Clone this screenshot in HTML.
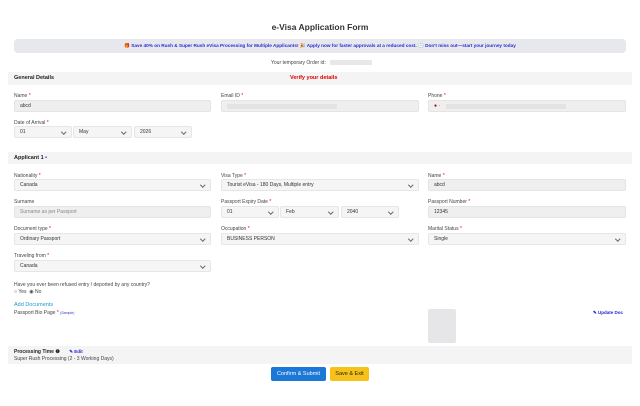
<!DOCTYPE html>
<html><head><style>
*{box-sizing:border-box;margin:0;padding:0}
body{width:640px;height:406px;background:#fff;font-family:"Liberation Sans",sans-serif;position:relative;overflow:hidden;color:#333}
.a{position:absolute;white-space:nowrap}
.lbl{font-size:5px;color:#444}
.lbl b{color:#d00;font-weight:normal}
.in{position:absolute;background:#efefef;border:1px solid #e4e4e4;border-radius:2px;font-size:5px;color:#333;padding-left:5px;display:flex;align-items:center;height:12px}
.sel{background:#f5f5f5;border:1px solid #e6e6e6}
.sel:after{content:"";position:absolute;right:6px;top:3px;width:2.5px;height:2.5px;border-right:0.7px solid #666;border-bottom:0.7px solid #666;transform:rotate(45deg)}
.bar{position:absolute;left:8px;width:624px;background:#f4f4f4}
.h{font-size:5.5px;font-weight:bold;color:#222}
</style></head><body>
<div class="a" style="left:0;width:640px;text-align:center;top:22px;font-size:8.5px;font-weight:bold;color:#333">e-Visa Application Form</div>
<div class="a" style="left:14px;width:612px;top:39px;height:14px;background:#e7e8ee;border-radius:4px;font-size:4.7px;font-weight:bold;color:#2a2ad0;text-align:center;line-height:14px">🎁 Save 40% on Rush &amp; Super Rush eVisa Processing for Multiple Applicants! 🎉 Apply now for faster approvals at a reduced cost. 🕒 Don't miss out—start your journey today</div>
<div class="a lbl" style="left:271px;top:60px">Your temporary Order id:</div>
<div class="a" style="left:330px;top:60px;width:42px;height:5px;background:#e8e8e8"></div>
<div class="bar" style="top:72px;height:13px"></div>
<div class="a h" style="left:14px;top:75px">General Details</div>
<div class="a" style="left:290px;top:75px;font-size:5.5px;font-weight:bold;color:#d00">Verify your details</div>

<div class="a lbl" style="left:14px;top:93px">Name <b>*</b></div>
<div class="in" style="left:14px;top:100px;width:197px">abcd</div>
<div class="a lbl" style="left:221px;top:93px">Email ID <b>*</b></div>
<div class="in" style="left:221px;top:100px;width:198px"><span style="display:block;width:110px;height:5px;background:#e3e3e3"></span></div>
<div class="a lbl" style="left:428px;top:93px">Phone <b>*</b></div>
<div class="in" style="left:428px;top:100px;width:198px"><span style="color:#a00">● ·</span><span style="display:block;margin-left:6px;width:120px;height:5px;background:#e3e3e3"></span></div>

<div class="a lbl" style="left:14px;top:120px">Date of Arrival <b>*</b></div>
<div class="in sel" style="left:14px;top:126px;width:58px">01</div>
<div class="in sel" style="left:73px;top:126px;width:59px">May</div>
<div class="in sel" style="left:134px;top:126px;width:58px">2026</div>

<div class="bar" style="top:152px;height:12px"></div>
<div class="a h" style="left:14px;top:155px">Applicant 1 <span style="color:#33c">•</span></div>

<div class="a lbl" style="left:14px;top:173px">Nationality <b>*</b></div>
<div class="in sel" style="left:14px;top:179px;width:197px">Canada</div>
<div class="a lbl" style="left:221px;top:173px">Visa Type <b>*</b></div>
<div class="in sel" style="left:221px;top:179px;width:198px">Tourist eVisa - 180 Days, Multiple entry</div>
<div class="a lbl" style="left:428px;top:173px">Name <b>*</b></div>
<div class="in" style="left:428px;top:179px;width:198px">abcd</div>

<div class="a lbl" style="left:14px;top:199px">Surname</div>
<div class="in" style="left:14px;top:206px;width:197px;color:#888">Surname as per Passport</div>
<div class="a lbl" style="left:221px;top:199px">Passport Expiry Date <b>*</b></div>
<div class="in sel" style="left:221px;top:206px;width:58px">01</div>
<div class="in sel" style="left:280px;top:206px;width:59px">Feb</div>
<div class="in sel" style="left:341px;top:206px;width:58px">2040</div>
<div class="a lbl" style="left:428px;top:199px">Passport Number <b>*</b></div>
<div class="in" style="left:428px;top:206px;width:198px">12345</div>

<div class="a lbl" style="left:14px;top:226px">Document type <b>*</b></div>
<div class="in sel" style="left:14px;top:233px;width:197px">Ordinary Passport</div>
<div class="a lbl" style="left:221px;top:226px">Occupation <b>*</b></div>
<div class="in sel" style="left:221px;top:233px;width:198px">BUSINESS PERSON</div>
<div class="a lbl" style="left:428px;top:226px">Marital Status <b>*</b></div>
<div class="in sel" style="left:428px;top:233px;width:198px">Single</div>

<div class="a lbl" style="left:14px;top:253px">Traveling from <b>*</b></div>
<div class="in sel" style="left:14px;top:260px;width:197px">Canada</div>

<div class="a lbl" style="left:14px;top:282px">Have you ever been refused entry / deported by any country?</div>
<div class="a lbl" style="left:14px;top:289px">○ Yes &nbsp;◉ No</div>
<div class="a" style="left:14px;top:302px;font-size:5.5px;color:#1a9ad0">Add Documents</div>
<div class="a lbl" style="left:14px;top:310px">Passport Bio Page <b>*</b> <span style="color:#33c;font-size:3.5px">(Sample)</span></div>
<div class="a" style="left:428px;top:309px;width:28px;height:34px;background:#e6e6e9;border-radius:2px"></div>
<div class="a" style="left:593px;top:310px;font-size:4.5px;font-weight:bold;color:#22c">✎ Update Doc</div>

<div class="bar" style="top:346px;height:18px"></div>
<div class="a h" style="left:14px;top:349px;font-size:5px">Processing Time ❶ <span style="color:#22c;margin-left:8px;font-size:4.5px">✎ Edit</span></div>
<div class="a lbl" style="left:14px;top:356px">Super Rush Processing (2 - 3 Working Days)</div>

<div class="a" style="left:271px;top:367px;width:55px;height:14px;background:#1b78d6;border-radius:2px;color:#fff;font-size:5.5px;text-align:center;line-height:14px">Confirm &amp; Submit</div>
<div class="a" style="left:330px;top:367px;width:39px;height:14px;background:#f6c21a;border-radius:2px;color:#222;font-size:5.5px;text-align:center;line-height:14px">Save &amp; Exit</div>
</body></html>
